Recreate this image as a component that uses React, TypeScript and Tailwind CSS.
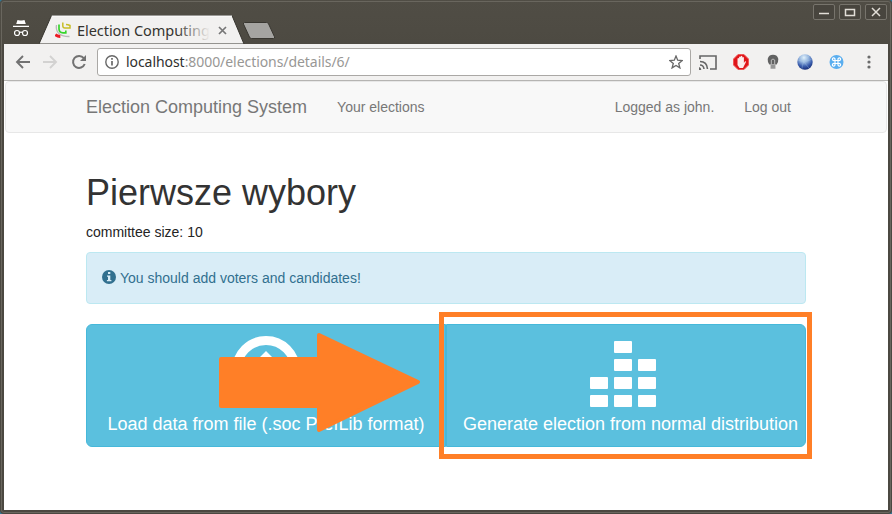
import React from "react";

function TitleBar() {
  return (
    <header className="-mx-[4px] flex h-[44px] shrink-0 bg-gradient-to-b from-[#504d45] to-[#4d4a42]">
      <div className="flex w-[39px] justify-center">
        <svg className="mt-[19px] ml-[3px] h-[18px] w-[18px]" viewBox="0 0 18 18" fill="none">
          <path d="M5.500 1 8 1.600h2L12.500 1l1.300 4H4.200z" fill="#fff" />
          <path d="M1 7.300h16" stroke="#fff" strokeWidth="1.300" />
          <circle cx="5" cy="14" r="2.500" stroke="#fff" strokeWidth="1.200" />
          <circle cx="13" cy="14" r="2.500" stroke="#fff" strokeWidth="1.200" />
          <path d="M7.500 13.500q1.500-.8 3 0" stroke="#fff" strokeWidth="1.200" />
        </svg>
      </div>
      <div className="relative flex h-[44px] w-[205px] items-start">
        <svg className="absolute inset-0" width="240" height="44" viewBox="0 0 240 44">
          <path d="M0 44 12.500 15.500H193L205 44z" fill="#f2f1f0" stroke="#36342e" />
          <path d="M12.800 16H193" stroke="#fff" />
          <path d="M205.500 22.500h22q1.500 0 2 1.300l6 13q.6 1.700-1 1.700H212.500q-1.300 0-2-1.400l-6-13q-.5-1.600 1-1.600z" fill="#a5a4a1" stroke="#393731" />
        </svg>
        <svg className="relative mt-[22px] ml-[16px] h-[16px] w-[16px]" viewBox="0 0 16 16" fill="none">
          <path d="M1.500 3q-1 6 3 9 3.500 2.700 10 2.500" stroke="#b9b9b9" strokeWidth="1.300" />
          <path d="M.3 12.600q2 2 5 1.900" stroke="#ed1b24" strokeWidth="2.800" />
          <path d="M4 2.500V7q.2 3.800 4 3.800h2.800V8.500" stroke="#35d52b" strokeWidth="1.700" />
          <path d="M7.800.5V4q.2 2 2 2H15V3.500q-2-1-4-1" stroke="#c7bd27" strokeWidth="1.500" />
        </svg>
        <div className="relative mt-[19px] ml-[6px] h-[23px] w-[133px] overflow-hidden font-['Noto_Sans','Open_Sans',sans-serif] text-[14.500px] leading-[22px] tracking-[-0.050px] whitespace-nowrap text-[#35342f]">
          Election Computing
          <div className="absolute inset-y-0 right-0 w-[34px] bg-gradient-to-r from-transparent to-[#f2f1f0]" />
        </div>
        <svg className="relative mt-[26px] ml-[8px] h-[9px] w-[9px]" viewBox="0 0 9 9">
          <path d="m1 1 7 7m0-7L1 8" stroke="#777" strokeWidth="1.700" />
        </svg>
      </div>
      <div className="ml-auto flex gap-[4px] pt-[4px] pr-[5px]">
        {["M6 9.500h10", "M6.500 5.500h9v6h-9zM6 5.500h10", "m7 4 8 8m0-8-8 8"].map((d) => (
          <svg key={d} className="h-[16px] w-[22px]" viewBox="0 0 22 16" fill="none">
            <rect x=".5" y=".5" width="21" height="15" rx="1.500" fill="#48453e" stroke="#77746c" />
            <path d={d} stroke="#e2dfd8" strokeWidth="1.500" />
          </svg>
        ))}
      </div>
    </header>
  );
}

function Toolbar() {
  return (
    <div className="flex h-[37px] shrink-0 items-center border-b border-[#b5b4b2] bg-[#f2f1f0]">
      <div className="flex w-[93px] items-center gap-[13px] pl-[11px]">
        <svg className="h-[14px] w-[15px]" viewBox="0 0 15 14" fill="none" stroke="#727272" strokeWidth="1.900">
          <path d="M15 7H2M8 1 2 7l6 6" />
        </svg>
        <svg className="h-[14px] w-[15px]" viewBox="0 0 15 14" fill="none" stroke="#d3d2d1" strokeWidth="1.900">
          <path d="M0 7h13M7 1l6 6-6 6" />
        </svg>
        <svg className="h-[16px] w-[16px]" viewBox="0 0 16 16" fill="none">
          <path d="M12.800 4.200A6 6 0 1 0 13.700 10" stroke="#727272" strokeWidth="2" />
          <path d="M15 1v6H9z" fill="#727272" />
        </svg>
      </div>
      <div className="flex h-[28px] w-[594px] items-center rounded-[3px] border border-[#aaa8a5] bg-white pl-[7px]">
        <svg className="h-[14px] w-[14px]" viewBox="0 0 14 14" fill="none">
          <circle cx="7" cy="7" r="6.200" stroke="#686868" strokeWidth="1.400" />
          <path d="M7 6v4.500M7 3v1.800" stroke="#686868" strokeWidth="1.700" />
        </svg>
        <div className="ml-[7px] font-['Noto_Sans','Open_Sans',sans-serif] text-[14px] leading-[22px] tracking-[-0.060px] whitespace-nowrap text-[#989795]">
          <span className="text-[#30302e]">localhost</span>:8000/elections/details/6/
        </div>
        <svg className="mr-[7px] ml-auto h-[14px] w-[14px]" viewBox="0 0 14 14" fill="none">
          <path d="m7 1 1.700 4.200 4.500.3-3.500 2.900 1.200 4.500L7 10.400l-3.900 2.500 1.200-4.500L.8 5.500l4.500-.3z" stroke="#686868" strokeWidth="1.300" />
        </svg>
      </div>
      <div className="ml-[8px] flex items-center gap-[16px]">
        <svg className="h-[15px] w-[18px]" viewBox="0 0 18 15" fill="none" stroke="#666" strokeWidth="1.600">
          <path d="M1 4V1h16v13h-6M1 6.500q7 0 7.500 7.500M1 10q3.500 0 4 4" />
          <path d="M0 12q2.300.3 2.300 3H0z" fill="#666" stroke="none" />
        </svg>
        <svg className="h-[16px] w-[16px]" viewBox="0 0 16 16">
          <path d="M5 .5h6L15.500 5v6L11 15.500H5L.5 11V5z" fill="#df1519" stroke="#ef5555" />
          <path d="M4.500 7.500V4.500q.8-.8 1.600 0V3q.8-.8 1.600 0v-.8q.8-.8 1.600 0v1.300q.8-.8 1.600 0V9l1-1.500q1.200-.6 1.200.3L11 12l-1 2H6.500l-2-3z" fill="#fbeceb" />
        </svg>
        <svg className="h-[16px] w-[16px]" viewBox="0 0 16 16">
          <path d="M5.500 10.500H4.300Q2.500 8 2.700 5 3.500.8 8 .7q4.500.1 5.300 4.300.2 3-1.600 5.500h-1.200z" fill="#626262" />
          <path d="M6.300 10.500V6q1.700-2 3.400 0v4.500" stroke="#bdbdbd" fill="none" />
          <path d="M5.700 10.500h4.600v4H5.700z" fill="#aaa" />
          <path d="M5.500 12h5m-5 2h5" stroke="#777" strokeWidth=".7" />
        </svg>
        <svg className="h-[16px] w-[16px]" viewBox="0 0 16 16">
          <defs>
            <radialGradient id="globe" cx=".43" cy=".22" r=".8">
              <stop stopColor="#e2f2fc" />
              <stop offset=".4" stopColor="#91b1dc" />
              <stop offset=".7" stopColor="#3c5fae" />
              <stop offset="1" stopColor="#142b74" />
            </radialGradient>
          </defs>
          <circle cx="8" cy="8" r="7.700" fill="url(#globe)" />
          <path d="M1 6q7 3 14-1M4 2q2 6 8 12M12 2Q5 7 5 15" stroke="#b6d6ef" strokeWidth=".5" fill="none" opacity=".6" />
        </svg>
        <svg className="h-[14px] w-[15px]" viewBox="0 0 15 14">
          <circle cx="7.500" cy="7" r="7" fill="#5aaeef" />
          <path d="M6 5.500h3v3H6zM6 5.500H5A1.300 1.300 0 1 1 6 4.200zm3 0V4.200a1.300 1.300 0 1 1 1 1.300zm0 3h1a1.300 1.300 0 1 1-1 1.300zm-3 0v1.300A1.300 1.300 0 1 1 5 8.500z" fill="none" stroke="#fff" strokeWidth="1.200" />
        </svg>
        <svg className="ml-[7px] h-[14px] w-[4px]" viewBox="0 0 4 14" fill="#6b6b6b">
          <circle cx="2" cy="2" r="1.600" /><circle cx="2" cy="7" r="1.600" /><circle cx="2" cy="12" r="1.600" />
        </svg>
      </div>
    </div>
  );
}

function DistributionIcon() {
  const columns = [2, 4, 3];
  return (
    <div className="mr-[16px] flex h-[66px] items-end gap-[6px]">
      {columns.map((count, column) => (
        <div key={column} className="flex flex-col gap-[6px]">
          {Array.from({ length: count }, (_, row) => (
            <div key={row} className="h-[12px] w-[18px] rounded-[1px] bg-white" />
          ))}
        </div>
      ))}
    </div>
  );
}

function Page() {
  return (
    <main className="h-[429px] bg-white pl-px font-['Liberation_Sans',Arial,sans-serif] text-[14px] leading-[20px] text-[#333]">
      <nav className="flex h-[52px] w-[882px] items-center rounded-[4px] border border-[#e7e7e7] bg-[#f8f8f8] pl-[80px] text-[#777]">
        <a className="text-[18px]">Election Computing System</a>
        <a className="ml-[30px]">Your elections</a>
        <span className="ml-auto">Logged as john.</span>
        <a className="mr-[95px] ml-[30px]">Log out</a>
      </nav>
      <div className="ml-[81px] w-[720px]">
        <h1 className="pt-[40px] text-[36px] leading-[40px] font-normal">Pierwsze wybory</h1>
        <p className="mt-[9px] text-[#242424]">committee size: 10</p>
        <div className="mt-[10px] flex h-[52px] items-center rounded-[4px] border border-[#bce8f1] bg-[#d9edf7] pl-[15px] text-[#31708f]">
          <svg className="mr-[4px] h-[14px] w-[14px] -translate-y-px" viewBox="0 0 14 14">
            <circle cx="7" cy="7" r="7" fill="#31708f" />
            <path d="M6 2h2.300v2H6zM5 5.400h3.300v4.500h1.100v1.400H4.900V9.900H6V6.800H5z" fill="#d9edf7" />
          </svg>
          You should add voters and candidates!
        </div>
        <div className="relative mt-[20px] flex h-[123px] text-[18px] leading-[24px] text-white">
          <button className="flex w-[360px] flex-col items-center rounded-l-[6px] border border-[#46b8da] bg-[#5bc0de] pt-[11px]">
            <svg className="h-[68px] w-[68px]" viewBox="0 0 68 68" fill="none">
              <circle cx="34" cy="34" r="29.500" stroke="white" strokeWidth="9" />
              <path d="m34 15 18 18H40v18H28V33H16z" fill="white" />
            </svg>
            <span className="mt-[8px] whitespace-nowrap">Load data from file (.soc PrefLib format)</span>
          </button>
          <button className="flex w-[360px] flex-col items-center rounded-r-[6px] border border-[#46b8da] bg-[#5bc0de] pt-[16px] pl-[9px]">
            <DistributionIcon />
            <span className="mt-[5px] whitespace-nowrap">Generate election from normal distribution</span>
          </button>
          <svg className="absolute top-[8px] left-[132px] h-[101px] w-[204px]" viewBox="0 0 204 101">
            <path d="M3 27h98V3l99 47-99 48V74H3z" fill="#ff7f27" stroke="#ff7f27" strokeWidth="4" strokeLinejoin="round" />
          </svg>
          <div className="absolute top-[-12px] left-[353px] h-[147px] w-[373px] border-[5px] border-[#ff7f27]" />
        </div>
      </div>
    </main>
  );
}

export default function App() {
  return (
    <div className="h-[514px] w-[892px] bg-[#2f7897]">
      <div className="relative h-[514px] w-[892px] overflow-hidden rounded-[4px] bg-[#4b4841] px-[4px]">
        <TitleBar />
        <Toolbar />
        <Page />
        <div className="pointer-events-none absolute inset-[1px] rounded-[3px] border border-[#69665e]" />
      </div>
    </div>
  );
}
